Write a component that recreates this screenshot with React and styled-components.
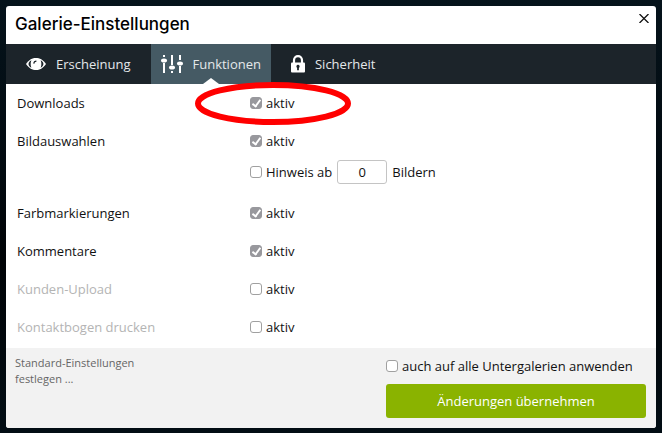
import React from 'react';
import styled, { createGlobalStyle } from 'styled-components';

const GlobalStyle = createGlobalStyle`
  *,
  *::after {
    box-sizing: border-box;
  }

  body {
    margin: 0;
    min-height: 100vh;
    background: linear-gradient(#05131b, #020a10 40%, #000306 60%, #020d14);
    font-family: 'Open Sans', 'Noto Sans', sans-serif;
    font-size: 13px;
    line-height: 16px;
    color: #111;
  }
`;

const Dialog = styled.section`
  margin: 6px 6px 5px;
  background: #fff;
  border-radius: 3px;
  overflow: hidden;
`;

const Header = styled.header`
  display: flex;
  align-items: flex-start;
  justify-content: space-between;
  height: 38px;
  padding: 8px 6px 0 9px;
`;

const Title = styled.h1`
  margin: 0;
  font-family: Inter, sans-serif;
  font-size: 17px;
  font-weight: 500;
  line-height: 20px;
  color: #000;
`;

const CloseButton = styled.button`
  display: flex;
  padding: 0;
  border: 0;
  background: none;
`;

const Tabs = styled.nav`
  display: flex;
  gap: 10px;
  height: 40px;
  padding-left: 10px;
  background: #1c242a;
`;

const Tab = styled.a`
  position: relative;
  display: flex;
  align-items: center;
  gap: 10px;
  padding: 0 10px;
  background: ${props => (props.$active ? '#455a64' : 'none')};
  color: #e4e8ea;
  text-decoration: none;
`;

const TabArrow = styled.span`
  position: absolute;
  bottom: 0;
  left: 50%;
  margin-left: -8px;
  border: 8px solid transparent;
  border-top: 0;
  border-bottom: 6px solid #fff;
`;

const Settings = styled.div`
  padding: 0 11px 2px;
`;

const Row = styled.div`
  display: grid;
  grid-template-columns: 233px 1fr;
`;

const RowName = styled.span`
  line-height: 38px;
  color: ${props => (props.$muted ? '#b4b4b4' : '#111')};
`;

const CheckLabel = styled.label`
  position: relative;
  display: inline-flex;
  align-items: center;
  gap: 4px;
  height: ${props => (props.$row ? '38px' : '24px')};
`;

const Checkbox = styled.input.attrs({ type: 'checkbox' })`
  appearance: none;
  display: flex;
  align-items: flex-start;
  justify-content: center;
  width: 12px;
  height: 12px;
  margin: 0;
  border: 1px solid #a0a0a0;
  border-radius: 3px;
  background: #fff;

  &:checked {
    border-color: #98989d;
    background: #98989d;
  }

  &:checked::after {
    content: '';
    width: 5px;
    height: 9px;
    border: solid #fff;
    border-width: 0 2px 2px 0;
    transform: rotate(36deg);
  }
`;

const Hint = styled.div`
  display: flex;
  align-items: center;
  gap: 5px;
  padding-bottom: 10px;
`;

const CountInput = styled.input`
  width: 50px;
  height: 24px;
  padding: 0;
  border: 1px solid #c4c4c4;
  border-radius: 3px;
  background: #fff;
  font: inherit;
  color: #111;
  text-align: center;
`;

const Marker = styled.svg`
  position: absolute;
  top: -2px;
  left: -55px;
  z-index: 1;
  pointer-events: none;
`;

const Footer = styled.footer`
  display: flex;
  align-items: flex-start;
  justify-content: space-between;
  padding: 6px 10px 10px 9px;
  background: #f2f2f2;
`;

const DefaultsLink = styled.a`
  width: 140px;
  padding-top: 1px;
  font-size: 11px;
  color: #666;
  text-decoration: none;
`;

const Actions = styled.div`
  display: flex;
  flex-direction: column;
  width: 260px;
  gap: 6px;
`;

const SubmitButton = styled.button`
  height: 34px;
  border: 0;
  border-radius: 3px;
  background: #8ab300;
  font: inherit;
  color: #fff;
`;

const EyeIcon = () => (
  <svg width="20" height="12" viewBox="0 0 20 12" aria-hidden="true">
    <path d="M0 6C3 1.6 6.300 0 10 0s7 1.600 10 6c-3 4.400-6.300 6-10 6S3 10.400 0 6z" fill="#fff" />
    <path d="M5.400 2.200C1.600 4.200 1.600 7.800 5.400 9.800C4.400 7.400 4.400 4.600 5.400 2.200zM14.600 2.200c3.800 2 3.800 5.600 0 7.600c1-2.400 1-5.200 0-7.600z" fill="#1c242a" />
    <path d="M7.800 5.600C7.900 4.100 8.900 3.200 10.400 3.100" fill="none" stroke="#1c242a" strokeWidth="1.100" />
  </svg>
);

const SlidersIcon = () => (
  <svg width="22" height="18" viewBox="0 0 22 18" fill="#fff" aria-hidden="true">
    <path d="M2 0h2v2H2zM2 8h2v10H2zM10 0h2v10h-2zM10 16h2v2h-2zM18 0h2v5h-2zM18 11h2v7h-2z" />
    <ellipse cx="3" cy="5.500" rx="3" ry="2" />
    <ellipse cx="11" cy="12.500" rx="3" ry="2" />
    <ellipse cx="19" cy="8.500" rx="3" ry="2" />
  </svg>
);

const LockIcon = () => (
  <svg width="14" height="18" viewBox="0 0 14 18" aria-hidden="true">
    <path d="M3 9V5.200a4 4 0 0 1 8 0V9" fill="none" stroke="#fff" strokeWidth="2.200" />
    <rect y="7.500" width="14" height="10" rx="1" fill="#fff" />
    <path d="M7 9.800a1.700 1.700 0 0 1 .9 3.100V15.300H6.100v-2.400A1.700 1.700 0 0 1 7 9.800z" fill="#1c242a" />
  </svg>
);

const tabs = [
  { title: 'Erscheinung', icon: EyeIcon },
  { title: 'Funktionen', icon: SlidersIcon, active: true },
  { title: 'Sicherheit', icon: LockIcon },
];

const settings = [
  { name: 'Downloads', checked: true, marked: true },
  { name: 'Bildauswahlen', checked: true, hint: true },
  { name: 'Farbmarkierungen', checked: true },
  { name: 'Kommentare', checked: true },
  { name: 'Kunden-Upload', muted: true },
  { name: 'Kontaktbogen drucken', muted: true },
];

const SelectionHint = () => (
  <Hint>
    <CheckLabel>
      <Checkbox />
      Hinweis ab
    </CheckLabel>
    <CountInput id="count" type="text" defaultValue="0" />
    <label htmlFor="count">Bildern</label>
  </Hint>
);

const Setting = ({ name, checked, muted, marked, hint }) => (
  <Row>
    <RowName $muted={muted}>{name}</RowName>
    <div>
      <CheckLabel $row>
        <Checkbox defaultChecked={checked} aria-label={name + ' aktiv'} />
        aktiv
        {marked && (
          <Marker width="156" height="43" aria-hidden="true">
            <ellipse cx="78" cy="21.500" rx="75" ry="18.500" fill="none" stroke="#f00" strokeWidth="6" />
          </Marker>
        )}
      </CheckLabel>
      {hint && <SelectionHint />}
    </div>
  </Row>
);

const App = () => (
  <>
    <GlobalStyle />
    <Dialog>
      <Header>
        <Title>Galerie-Einstellungen</Title>
        <CloseButton type="button" aria-label="Schließen">
          <svg width="12" height="9" viewBox="0 0 12 9" stroke="#111" strokeWidth="1.300">
            <path d="M1.500 0l9 9M10.500 0l-9 9" />
          </svg>
        </CloseButton>
      </Header>
      <Tabs>
        {tabs.map(({ title, icon: Icon, active }) => (
          <Tab key={title} href="#" $active={active}>
            <Icon />
            {title}
            {active && <TabArrow />}
          </Tab>
        ))}
      </Tabs>
      <Settings>
        {settings.map(item => (
          <Setting key={item.name} {...item} />
        ))}
      </Settings>
      <Footer>
        <DefaultsLink href="#">Standard-Einstellungen festlegen ...</DefaultsLink>
        <Actions>
          <CheckLabel>
            <Checkbox />
            auch auf alle Untergalerien anwenden
          </CheckLabel>
          <SubmitButton type="button">Änderungen übernehmen</SubmitButton>
        </Actions>
      </Footer>
    </Dialog>
  </>
);

export default App;
